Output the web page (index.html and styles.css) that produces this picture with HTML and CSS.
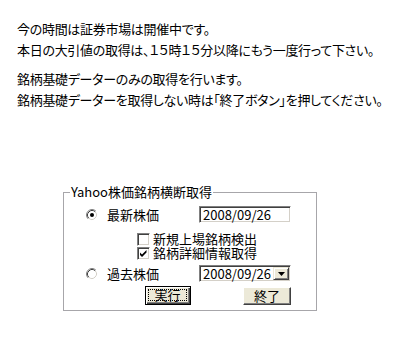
FILE: index.html
```html
<!DOCTYPE html>
<html>
<head>
<meta charset="utf-8">
<link rel="stylesheet" href="styles.css">
</head>
<body>
<div class="msg">
  <p>今の時間は証券市場は開催中です。<br>本日の大引値の取得は、１５時１５分以降にもう一度行って下さい。</p>
  <p>銘柄基礎データーのみの取得を行います。<br>銘柄基礎データーを取得しない時は「終了ボタン」を押してください。</p>
</div>
<fieldset class="panel">
  <legend>Yahoo株価銘柄横断取得</legend>
  <div class="row r1">
    <div class="opt">
      <svg class="radio" width="12" height="12" viewBox="0 0 12 12">
        <circle cx="6" cy="6" r="5" fill="#fff"/>
        <path d="M2.11 9.89 A5.5 5.5 0 0 1 9.89 2.11" fill="none" stroke="#808080"/>
        <path d="M9.89 2.11 A5.5 5.5 0 0 1 2.11 9.89" fill="none" stroke="#fff"/>
        <path d="M2.82 9.18 A4.5 4.5 0 0 1 9.18 2.82" fill="none" stroke="#404040"/>
        <path d="M9.18 2.82 A4.5 4.5 0 0 1 2.82 9.18" fill="none" stroke="#d4d0c8"/>
        <circle cx="6" cy="6" r="2" fill="#000"/>
      </svg>
      <span>最新株価</span>
    </div>
    <div class="field">2008/09/26</div>
  </div>
  <div class="row chk-row r2">
    <span class="chk"></span>
    <span>新規上場銘柄検出</span>
  </div>
  <div class="row chk-row">
    <span class="chk">
      <svg width="9" height="9" viewBox="0 0 9 9"><path d="M1 3.5 L3 5.5 L7.5 1 L7.5 3.5 L3 8 L1 6 Z" fill="#000"/></svg>
    </span>
    <span>銘柄詳細情報取得</span>
  </div>
  <div class="row r4">
    <div class="opt">
      <svg class="radio" width="12" height="12" viewBox="0 0 12 12">
        <circle cx="6" cy="6" r="5" fill="#fff"/>
        <path d="M2.11 9.89 A5.5 5.5 0 0 1 9.89 2.11" fill="none" stroke="#808080"/>
        <path d="M9.89 2.11 A5.5 5.5 0 0 1 2.11 9.89" fill="none" stroke="#fff"/>
        <path d="M2.82 9.18 A4.5 4.5 0 0 1 9.18 2.82" fill="none" stroke="#404040"/>
        <path d="M9.18 2.82 A4.5 4.5 0 0 1 2.82 9.18" fill="none" stroke="#d4d0c8"/>
      </svg>
      <span>過去株価</span>
    </div>
    <div class="select">
      <span class="sel-text">2008/09/26</span>
      <span class="sel-btn"><svg width="7" height="4" viewBox="0 0 7 4"><path d="M0 0 H7 L3.5 4 Z" fill="#000"/></svg></span>
    </div>
  </div>
  <div class="row btns">
    <div class="btn default"><span class="focus">実行</span></div>
    <div class="btn end">終了</div>
  </div>
</fieldset>
</body>
</html>
```
FILE: styles.css
```css
html, body {
  margin: 0;
  background: #fff;
}
body {
  font-family: "Noto Sans CJK JP", "Noto Sans", sans-serif;
  font-size: 13px;
  line-height: 21px;
  color: #000;
  padding-top: 18px;
  font-feature-settings: "palt";
}
.msg {
  padding-left: 17px;
  letter-spacing: -0.3px;
}
.msg p {
  margin: 0;
}
.msg p + p {
  margin-top: 8px;
}
.panel {
  box-sizing: border-box;
  width: 254px;
  margin: 74px 0 0 63px;
  padding: 0 0 5px 0;
  border: 1px solid #a7a6aa;
  box-shadow: inset 1px 1px #fff;
}
.panel legend {
  margin-left: 6px;
  padding: 0 1px;
  line-height: 16px;
}
.row {
  display: flex;
  align-items: center;
}
.r1 {
  margin-top: 6px;
  height: 17px;
}
.opt {
  width: 135px;
  box-sizing: border-box;
  padding-left: 22px;
  display: flex;
  align-items: center;
  gap: 9px;
  line-height: 17px;
}
.radio {
  display: block;
  flex: none;
}
.field, .select {
  box-sizing: border-box;
  width: 92px;
  height: 17px;
  border-top: 1px solid #808080;
  border-left: 1px solid #808080;
  border-right: 1px solid #fff;
  border-bottom: 1px solid #fff;
  box-shadow: inset 1px 1px #404040, inset -1px -1px #d4d0c8;
  background: #fff;
  line-height: 15px;
  padding-left: 3px;
}
.chk-row {
  height: 14px;
  line-height: 14px;
  padding-left: 73px;
  gap: 3px;
}
.r2 {
  margin-top: 9px;
}
.chk {
  box-sizing: border-box;
  width: 13px;
  height: 13px;
  flex: none;
  border-top: 1px solid #808080;
  border-left: 1px solid #808080;
  border-right: 1px solid #fff;
  border-bottom: 1px solid #fff;
  box-shadow: inset 1px 1px #404040, inset -1px -1px #d4d0c8;
  background: #fff;
  display: flex;
  align-items: center;
  justify-content: center;
}
.chk svg {
  display: block;
}
.r4 {
  margin-top: 5px;
  height: 17px;
}
.select {
  display: flex;
  align-items: center;
  padding: 1px 1px 1px 3px;
  justify-content: space-between;
}
.sel-text {
  line-height: 13px;
}
.sel-btn {
  box-sizing: border-box;
  width: 16px;
  height: 13px;
  background: #ece9d8;
  border-top: 1px solid #ece9d8;
  border-left: 1px solid #ece9d8;
  border-right: 1px solid #404040;
  border-bottom: 1px solid #404040;
  box-shadow: inset 1px 1px #fff, inset -1px -1px #808080;
  display: flex;
  align-items: center;
  justify-content: center;
}
.sel-btn svg {
  display: block;
}
.btns {
  margin-top: 4px;
  height: 19px;
  padding-left: 81px;
}
.btn {
  box-sizing: border-box;
  height: 18px;
  background: #ece9d8;
  border-top: 1px solid #fff;
  border-left: 1px solid #fff;
  border-right: 1px solid #404040;
  border-bottom: 1px solid #404040;
  box-shadow: inset -1px -1px #808080;
  display: flex;
  align-items: center;
  justify-content: center;
  line-height: 14px;
}
.btn.default {
  width: 46px;
  height: 19px;
  border: 1px solid #000;
  box-shadow: inset 1px 1px #fff, inset -1px -1px #404040, inset -2px -2px #808080;
  padding: 2px 3px 3px 2px;
}
.focus {
  box-sizing: border-box;
  width: 100%;
  height: 100%;
  border: 1px dotted #000;
  display: flex;
  align-items: center;
  justify-content: center;
}
.btn.end {
  width: 48px;
  margin-left: 52px;
}
```
